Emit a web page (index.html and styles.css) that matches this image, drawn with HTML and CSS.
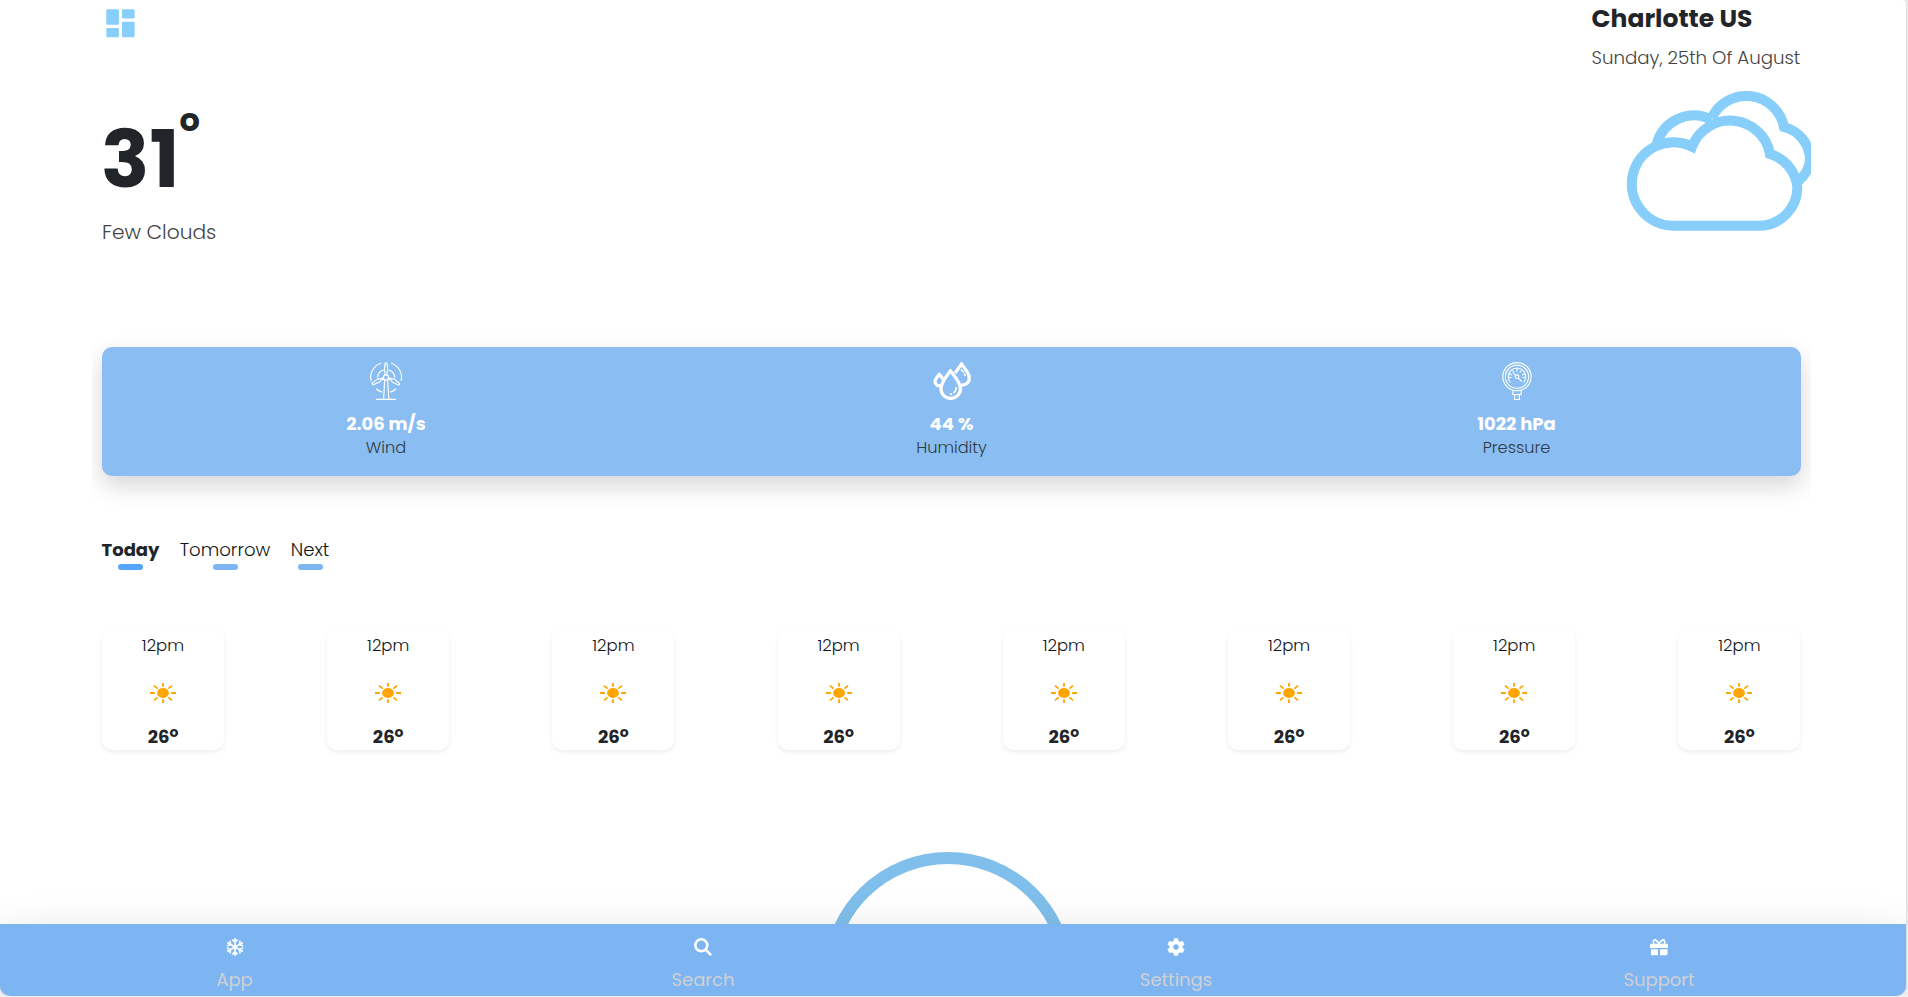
FILE: index.html
```html
<!DOCTYPE html>
<html lang="en">
<head>
<meta charset="utf-8">
<title>Weather</title>
<link rel="stylesheet" href="styles.css">
</head>
<body>
<svg class="defs" width="0" height="0">
  <symbol id="sun" viewBox="0 0 26 20" preserveAspectRatio="none">
    <ellipse cx="13" cy="10" rx="5.9" ry="5"/>
    <path d="M13 0v3.8M13 16.2V20M0 10h4.8M21.2 10H26M4 2.6l3.6 3M22 2.6l-3.6 3M4 17.4l3.6-3M22 17.4l-3.6-3" fill="none" stroke="#ffa500" stroke-width="1.8"/>
  </symbol>
</svg>
<div class="app">
  <main class="content">
    <header class="header">
      <svg class="menu" viewBox="0 0 29 29"><rect x=".3" y=".3" width="12.6" height="15.4" rx="1.3"/><rect x="16" y=".3" width="12.6" height="9.3" rx="1.3"/><rect x=".3" y="19" width="12.6" height="9.3" rx="1.3"/><rect x="16" y="12.8" width="12.6" height="15.5" rx="1.3"/></svg>
      <div class="place">
        <h1 class="city">Charlotte US</h1>
        <p class="date">Sunday, 25th Of August</p>
      </div>
    </header>
    <section class="hero">
      <div>
        <div class="temp"><span class="temp-value">31</span><span class="temp-degree">o</span></div>
        <p class="summary">Few Clouds</p>
      </div>
      <svg class="clouds" viewBox="190 260 563 440"><g fill="none" stroke="#87cefa" stroke-width="30">
        <path d="M291 432A115 115 0 0 1 455 358"/>
        <path d="M456 353A115 115 0 0 1 673 380A103 103 0 0 1 751 478Q749 515 715 543"/>
        <path d="M342 676A125 125 0 1 1 397 439A122 122 0 0 1 631 461A115 115 0 0 1 713 561A115 115 0 0 1 598 676Z" fill="#fff"/>
      </g></svg>
    </section>
    <section class="stats">
      <div class="stat">
        <svg class="stat-icon" viewBox="0 0 38 38"><g fill="none" stroke="#fff" stroke-width="1.15" stroke-linecap="round" stroke-linejoin="round">
          <circle cx="19" cy="15.5" r="2.6"/>
          <path d="M18 12.8V10l-.8-1.400.9-7.200q.9-1.400 1.800 0l.9 7.200L20 10v2.800M16.700 17l-2.500 1-1.400 2-6.500 2.600q-1.600-.2-1-1.700l5.600-4h2.400l2.900-1M21.300 17l2.500 1 1.400 2 6.200 3q1.600-.2 1-1.700l-5.300-4.400h-2.400l-2.900-1M17.600 18.500 16.600 37.400M20.600 18.500l1.200 18.900M9.500 37.400h19"/>
          <path d="M13.800 1.300A15 15 0 0 0 4 18.500M24.500 1.300a15 15 0 0 1 9.700 17.200M16 8.200q-4.800 1.600-5.500 7M22.300 8.200q4.800 1.600 5.500 7M9.500 27q2.500 2.400 5.500 3M28.800 27q-2.500 2.400-5.500 3"/>
        </g></svg>
        <strong class="stat-value">2.06 m/s</strong><span class="stat-label">Wind</span>
      </div>
      <div class="stat">
        <svg class="stat-icon" viewBox="0 0 38 38"><g fill="none" stroke="#fff" stroke-width="3.3" stroke-linejoin="round">
          <path d="M17.400 8.600C14 14 8 20 8 26.700a9.700 9.700 0 0 0 19.400 0C27.400 20 21 14 17.400 8.600Z"/>
          <path d="M9.200 23C5 25 2 22.500 2 19.500 2 17 4.500 14.800 6.300 12.300c1.500 2 3.400 3.800 4.400 5.900"/>
          <path d="M22 11C24.200 8 26.800 5 28.500 1.800c2.500 4.500 7.800 8.700 7.800 14.400 0 4.500-4 7.400-8.800 6.900"/>
          <path d="M28 7.500q3.400 3 4.200 6.500" stroke-width="1.5" stroke-dasharray="4 1"/>
          <path d="M23.300 25q0 6.300-6.500 7.400" stroke-width="1.6" stroke-dasharray="7 1.4 4"/>
        </g></svg>
        <strong class="stat-value">44 %</strong><span class="stat-label">Humidity</span>
      </div>
      <div class="stat">
        <svg class="stat-icon" viewBox="0 0 38 38"><g fill="none" stroke="#fff" stroke-width="1.1">
          <circle cx="19" cy="14.7" r="14.1"/><circle cx="19" cy="14.7" r="11.6"/>
          <path d="M12.500 20.500A8.700 8.700 0 1 1 25.500 20.500M19 6v3.500M11 11.500l2.800 1.400M27 11.500l-2.800 1.400M10.500 15.500h3M27.500 15.500h-3M14.500 8.500l1.600 2M23.500 8.500l-1.600 2M20.500 16.200l3.200 3.300M17.500 13.200l-2.200-2"/><circle cx="19" cy="14.7" r="1.8"/>
          <path d="M14.800 28.300v4.200h8.400v-4.200M16.600 32.500v5h4.800v-5"/>
        </g></svg>
        <strong class="stat-value">1022 hPa</strong><span class="stat-label">Pressure</span>
      </div>
    </section>
    <nav class="tabs">
      <a class="tab today">Today</a><a class="tab tomorrow">Tomorrow</a><a class="tab next">Next</a>
    </nav>
    <section class="hours">
      <article class="hour"><span class="time">12pm</span><svg class="sun"><use href="#sun"/></svg><b class="degrees">26<span class="deg">o</span></b></article>
      <article class="hour"><span class="time">12pm</span><svg class="sun"><use href="#sun"/></svg><b class="degrees">26<span class="deg">o</span></b></article>
      <article class="hour"><span class="time">12pm</span><svg class="sun"><use href="#sun"/></svg><b class="degrees">26<span class="deg">o</span></b></article>
      <article class="hour"><span class="time">12pm</span><svg class="sun"><use href="#sun"/></svg><b class="degrees">26<span class="deg">o</span></b></article>
      <article class="hour"><span class="time">12pm</span><svg class="sun"><use href="#sun"/></svg><b class="degrees">26<span class="deg">o</span></b></article>
      <article class="hour"><span class="time">12pm</span><svg class="sun"><use href="#sun"/></svg><b class="degrees">26<span class="deg">o</span></b></article>
      <article class="hour"><span class="time">12pm</span><svg class="sun"><use href="#sun"/></svg><b class="degrees">26<span class="deg">o</span></b></article>
      <article class="hour"><span class="time">12pm</span><svg class="sun"><use href="#sun"/></svg><b class="degrees">26<span class="deg">o</span></b></article>
    </section>
    <div class="ring"></div>
  </main>
  <nav class="bottom-nav">
    <a class="nav-item"><svg class="nav-icon" viewBox="0 0 18 18"><path d="M9 0v18M1.200 4.500l15.600 9M16.800 4.500l-15.600 9M6.300 1.600 9 4.200l2.700-2.600M6.300 16.400 9 13.800l2.700 2.600M.8 8l3.900-1.400L3.900 2.600M17.200 8l-3.900-1.400.8-4M.8 10l3.900 1.400-.8 4M17.200 10l-3.900 1.400.8 4" fill="none" stroke="#fff" stroke-width="1.6"/></svg><span class="nav-label">App</span></a>
    <a class="nav-item"><svg class="nav-icon" viewBox="0 0 18 18"><g fill="none" stroke="#fff" stroke-width="2.6"><circle cx="7.3" cy="7.3" r="6"/><path d="m11.700 11.700 5.400 5.400"/></g></svg><span class="nav-label">Search</span></a>
    <a class="nav-item"><svg class="nav-icon" viewBox="0 0 512 512"><path fill="#fff" d="M487.4 315.7l-42.6-24.6c4.3-23.2 4.3-47 0-70.2l42.6-24.6c4.9-2.8 7.1-8.6 5.5-14-11.1-35.6-30-67.8-54.7-94.6-3.8-4.1-10-5.1-14.8-2.3L380.8 110c-17.900-15.400-38.500-27.300-60.800-35.100V25.800c0-5.600-3.900-10.500-9.400-11.700-36.700-8.200-74.300-7.800-109.200 0-5.500 1.200-9.400 6.100-9.400 11.700V75c-22.200 7.900-42.800 19.800-60.800 35.100L88.700 85.500c-4.900-2.800-11-1.900-14.800 2.300-24.700 26.700-43.600 58.900-54.700 94.600-1.700 5.400.6 11.200 5.500 14L67.300 221c-4.300 23.200-4.300 47 0 70.200l-42.600 24.600c-4.900 2.800-7.100 8.600-5.500 14 11.100 35.600 30 67.800 54.700 94.600 3.800 4.100 10 5.100 14.800 2.300l42.600-24.600c17.900 15.400 38.500 27.300 60.800 35.100v49.200c0 5.600 3.900 10.500 9.400 11.700 36.700 8.200 74.300 7.800 109.200 0 5.500-1.200 9.400-6.100 9.400-11.700v-49.200c22.200-7.900 42.800-19.800 60.800-35.100l42.600 24.600c4.900 2.800 11 1.900 14.800-2.300 24.700-26.700 43.600-58.900 54.700-94.600 1.500-5.500-.7-11.300-5.600-14.100zM256 336c-44.100 0-80-35.900-80-80s35.900-80 80-80 80 35.900 80 80-35.900 80-80 80z"/></svg><span class="nav-label">Settings</span></a>
    <a class="nav-item"><svg class="nav-icon" viewBox="0 0 18 18"><path fill="#fff" d="M1 5.700h16a1 1 0 0 1 1 1V10H0V6.700a1 1 0 0 1 1-1zM1 11.200h7v6H2a1 1 0 0 1-1-1zM10 11.200h7.500v5a1 1 0 0 1-1 1H10z"/><path d="M9 6C7 2.400 5.500 1.500 4.300 2S3.200 4.500 4 6M9 6c2-3.600 3.500-4.500 4.700-4s1.300 2.500.5 4" fill="none" stroke="#fff" stroke-width="1.6"/></svg><span class="nav-label">Support</span></a>
  </nav>
</div>
</body>
</html>
```
FILE: styles.css
```css
* { box-sizing: border-box; }
body { margin: 0; background: #f1f1f1; color: #212529; font-family: Poppins, Inter, sans-serif; overflow: hidden; }
h1, p { margin: 0; }
.defs { display: block; }
.app { width: 1906px; height: 996px; display: flex; flex-direction: column; background: #fff; border-radius: 0 4px 10px 10px; overflow: hidden; box-shadow: 0 0 3px rgba(0,0,0,.2); }
.content { width: 1719px; height: 924px; margin-left: 92px; padding: 0 10px; overflow: hidden; }
.header { height: 86px; display: flex; justify-content: space-between; }
.menu { width: 29px; height: 29px; margin: 8.500px 0 0 4.300px; fill: #87cefa; }
.place { width: 209.500px; padding-top: 3px; white-space: nowrap; }
.city { font-size: 25px; line-height: 31px; font-weight: 700; }
.date { margin-top: 12px; font-size: 18.200px; line-height: 24px; font-weight: 300; color: #444; }
.hero { height: 261px; display: flex; justify-content: space-between; align-items: flex-start; }
.temp { display: flex; align-items: flex-start; padding-top: 32px; font-weight: 700; }
.temp-value { margin: -1px 0 1px -1px; font-size: 80px; line-height: 84px; }
.temp-degree { margin-top: -14px; font-size: 32px; line-height: 32px; }
.summary { margin-top: 16px; font-size: 20.200px; line-height: 28px; font-weight: 300; color: #444; }
.clouds { width: 187.700px; height: 146.700px; margin: .7px -10px 0 0; }
.stats { height: 129px; padding-top: 15px; display: grid; grid-template-columns: 568px 563px 567px; background: #8abdf2; border-radius: 10px; box-shadow: 0 10px 25px rgba(0,0,0,.16); }
.stat { display: flex; flex-direction: column; align-items: center; }
.stat-icon { width: 38px; height: 38px; }
.stat-value { margin-top: 12px; font-size: 18px; line-height: 24px; font-weight: 700; color: #fff; }
.stat-label { margin-top: 1px; font-size: 16.200px; line-height: 22px; font-weight: 300; color: #2f3b47; }
.tabs { display: flex; gap: 21px; padding-top: 61.500px; height: 152.500px; }
.tab { display: flex; flex-direction: column; align-items: center; font-size: 18.100px; line-height: 24px; font-weight: 300; color: #111417; }
.tab::after { content: ""; width: 25px; height: 6px; margin-top: 2.500px; border-radius: 3px; background: #7cb5f1; }
.today { width: 57px; font-size: 18px; font-weight: 700; color: #212529; }
.today::after { background: #55a5fc; }
.tomorrow { width: 90px; }
.next { width: 38px; }
.hours { width: 1698.500px; display: flex; justify-content: space-between; }
.hour { width: 122px; height: 121.500px; padding-top: 5.500px; display: flex; flex-direction: column; align-items: center; border-radius: 10px; box-shadow: 0 2px 4px rgba(0,0,0,.075); }
.time { font-size: 16.500px; line-height: 24px; font-weight: 300; color: #111417; }
.sun { width: 26px; height: 20px; margin: 25px 0 21.500px; fill: #ffa500; }
.degrees { display: flex; font-size: 18px; line-height: 24px; }
.deg { font-size: 14px; line-height: 14px; }
.ring { width: 250px; height: 250px; margin: 102px auto 0 721px; border: 12px solid #80bfeb; border-radius: 50%; }
.bottom-nav { height: 72px; flex: none; padding-top: 14px; display: grid; grid-template-columns: 469px 468px 478px 488px; background: #7cb5f1; box-shadow: 0 16px 48px rgba(0,0,0,.175); position: relative; }
.nav-item { display: flex; flex-direction: column; align-items: center; }
.nav-icon { width: 18px; height: 18px; }
.nav-label { margin-top: 12px; font-size: 18px; line-height: 24px; color: #d0d0d4; }
```
